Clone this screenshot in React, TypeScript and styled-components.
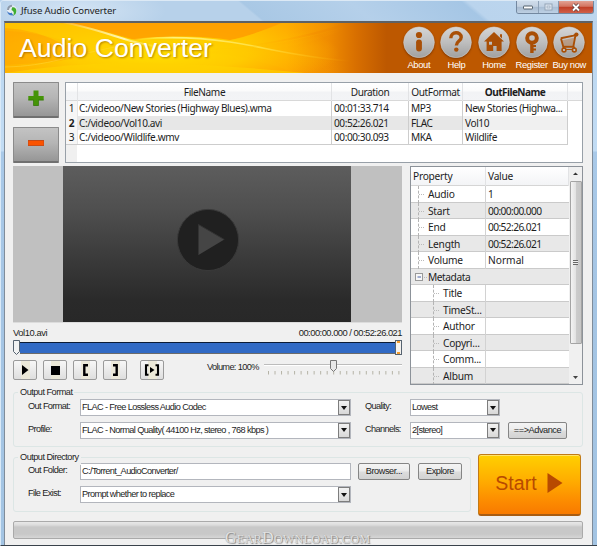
import React from "react";
import styled, { createGlobalStyle, css } from "styled-components";

const GlobalStyle = createGlobalStyle`
  *, *::before, *::after { box-sizing: border-box; }
  html, body { margin: 0; padding: 0; overflow: hidden; }
  body { background: #b4d0ec; }
`;

const segoe = `"Noto Sans", "Open Sans", sans-serif`;
const sans = `"Liberation Sans", Arial, sans-serif`;

/* ---------- window frame ---------- */

const Window = styled.div`
  width: 597px;
  height: 546px;
  display: flex;
  flex-direction: column;
  overflow: hidden;
  background: linear-gradient(180deg, #b9d1ea 0, #bdd8f1 60px, #c2dcf4 150px, #a9c9e8 151px, #a5c5e4 300px, #a3c4e3 100%);
  border-top: 1px solid #dce9f5;
  border-left: 1px solid #d9e9f7;
  border-bottom: 1px solid #39424b;
  border-radius: 4px 4px 0 0;
  color: #1d1d1d;
  white-space: nowrap;
`;

const TitleBar = styled.header`
  height: 20px;
  flex: none;
  display: flex;
  align-items: flex-start;
  padding-left: 5px;
  background:
    radial-gradient(ellipse 90px 26px at 75px 10px, rgba(222, 235, 247, 0.75), rgba(222, 235, 247, 0) 100%),
    linear-gradient(40deg, rgba(160, 193, 224, 0) 42%, #a9c8e5 42.5%, #b5d0ea 60%, #a5c6e5 78%, #bad4ed 79%, #bed7ef 100%),
    #b7d1ea;
`;

const TitleText = styled.span`
  flex: 1;
  margin-left: 3px;
  font: 9.6px/19px ${segoe};
  letter-spacing: -0.14px;
`;

const WindowButtons = styled.div`
  display: flex;
  height: 13px;
  margin-right: 3px;
  border: 1px solid #7388a0;
  border-top: 0;
  border-radius: 0 0 3px 3px;
  overflow: hidden;
`;

const WindowButton = styled.div<{ $w: number; $close?: boolean; $dim?: boolean }>`
  width: ${(p) => p.$w}px;
  display: flex;
  align-items: center;
  justify-content: center;
  border-left: 1px solid #8799ae;
  opacity: ${(p) => (p.$dim ? 0.85 : 1)};
  background: ${(p) =>
    p.$close
      ? "linear-gradient(180deg, #e2a193 0, #d37461 45%, #c03d25 50%, #d0604a 100%)"
      : "linear-gradient(180deg, #cfdcea 0, #c3d1e1 45%, #a7bacf 50%, #bed0e3 100%)"};
  &:first-child { border-left: 0; }
`;

const Body = styled.main`
  flex: 1;
  margin: 0 4px 0 3px;
  border: 1px solid #7f8c9a;
  border-top: 2px solid #5e6164;
  border-bottom: 0;
  background: #f0f0f0;
  display: flex;
  flex-direction: column;
`;

/* ---------- banner ---------- */

const Banner = styled.div`
  height: 50px;
  flex: none;
  display: grid;
  grid-template: 50px / 1fr auto;
  overflow: hidden;
  background: #bd5800;
`;

const BannerArt = styled.svg`
  grid-area: 1 / 1 / 2 / 3;
  width: 587px;
  height: 50px;
`;

const BannerTitle = styled.h1`
  grid-area: 1 / 1;
  z-index: 1;
  margin: 0;
  padding-left: 14px;
  font: 26.6px/51px ${sans};
  letter-spacing: 0.05px;
  color: #fff;
  text-shadow: 1px 1px 2px rgba(120, 70, 0, 0.55);
`;

const BannerNav = styled.nav`
  grid-area: 1 / 2;
  z-index: 1;
  display: flex;
  padding: 3px 4px 0 0;
`;

const NavItem = styled.a`
  width: 37.6px;
  display: flex;
  flex-direction: column;
  align-items: center;
  font: 9.4px/12px ${sans};
  letter-spacing: -0.35px;
  color: #fff;
  svg { flex: none; filter: drop-shadow(0 1px 1px rgba(80, 30, 0, 0.6)); }
`;

/* ---------- main content ---------- */

const Content = styled.div`
  flex: 1;
  display: flex;
  flex-direction: column;
  padding: 9px 9px 0 8px;
`;

const TopRow = styled.section`
  display: flex;
  height: 81px;
  gap: 6px;
`;

const SideButtons = styled.div`
  display: flex;
  flex-direction: column;
  justify-content: space-between;
`;

const SquareButton = styled.button`
  width: 46px;
  height: 36px;
  padding: 0 0 4px;
  border: 1px solid #8b8b8b;
  border-bottom: 2px solid #707070;
  border-radius: 1px;
  background: linear-gradient(180deg, #c3c3c3, #b5b5b5 45%, #969696);
  display: flex;
  align-items: center;
  justify-content: center;
`;

const FileTable = styled.div`
  flex: 1;
  border: 1px solid #98a0a8;
  background: linear-gradient(90deg, #f0f0f0 11px, #fff 11px);
  display: flex;
  flex-direction: column;
  font: 10.1px/14px ${segoe};
  letter-spacing: -0.4px;
`;

const tableColumns = css`
  display: grid;
  grid-template-columns: 12px 254px 77px 54px 105px 1fr;
`;

const TableHead = styled.div`
  ${tableColumns}
  height: 18.4px;
  line-height: 19px;
  background: linear-gradient(180deg, #fff, #fbfbfb 45%, #f2f3f5 55%, #f3f4f6);
  border-bottom: 1px solid #d8d8d8;
  span { text-align: center; border-right: 1px solid #e2e3e5; }
  span:last-child { border: 0; }
`;

const TableRow = styled.div<{ $selected?: boolean }>`
  ${tableColumns}
  height: 14.3px;
  span {
    padding-left: 2px;
    border-right: 1px solid #cdcdcd;
    background: ${(p) => (p.$selected ? "#e7e7e7" : "#fff")};
  }
  span:first-child {
    padding: 0;
    text-align: center;
    background: #f6f6f6;
    border-color: #e5e5e5;
    font-weight: ${(p) => (p.$selected ? 700 : 400)};
  }
  span:nth-child(2) { padding-left: 1px; }
  span:nth-child(5) { background: ${(p) => (p.$selected ? "#f0f0f0" : "#fff")}; }
`;

const TableEnd = styled.div`
  width: 502px;
  border-top: 1px solid #cdcdcd;
`;

const Fit = styled.b<{ $ls?: number; $bold?: boolean }>`
  font-weight: ${(p) => (p.$bold ? 700 : 400)};
  letter-spacing: ${(p) => p.$ls ?? 0}px;
`;

const MiddleRow = styled.section`
  display: flex;
  justify-content: space-between;
  height: 219px;
  margin-top: 3px;
`;

const Player = styled.div`
  width: 389px;
  display: flex;
  flex-direction: column;
  font: 9.4px/12px ${sans};
`;

const Screen = styled.div`
  height: 157px;
  display: flex;
  justify-content: center;
  padding-right: 1px;
  background: #c0c0c0;
  border-bottom: 1px solid #dcdcdc;
`;

const ScreenPicture = styled.div`
  width: 288px;
  background: linear-gradient(180deg, #5d5d5d, #4f4f4f 28%, #3a3a3a 60%, #2a2a2a 86%, #282828);
  display: flex;
  justify-content: center;
  align-items: center;
  padding: 0 0 8px 2px;
`;

const Caption = styled.div`
  display: flex;
  justify-content: space-between;
  margin-top: 4px;
  height: 13px;
`;

const SeekBar = styled.div`
  display: flex;
  align-items: center;
  height: 15px;
  i { flex: 1; height: 12px; background: #316ac5; border-top: 1px solid #0b1b35; border-bottom: 1px solid #6c6b6a; }
`;

const Controls = styled.div`
  display: flex;
  gap: 6px;
  margin-top: 5px;
  height: 20px;
  svg { flex: none; }
`;

const ControlButton = styled.button<{ $gap?: number }>`
  flex: none;
  width: 24px;
  height: 20px;
  padding: 0;
  margin-left: ${(p) => p.$gap ?? 0}px;
  border: 1px solid #9a9a9a;
  border-radius: 2px;
  background: linear-gradient(90deg, transparent 7px, #ece9d8 7px, #ece9d8 16px, transparent 16px), linear-gradient(180deg, #f7f7f7, #dedede);
  display: flex;
  align-items: center;
  justify-content: center;
`;

const VolumeLabel = styled.span`
  flex: 1;
  min-width: 0;
  margin-left: 37px;
  font-size: 9.2px;
  line-height: 14px;
  letter-spacing: -0.63px;
`;

const PropertyPanel = styled.div`
  width: 173px;
  display: flex;
  border: 1px solid #8c9299;
  background: #fff;
  font: 10.2px/16px ${segoe};
  letter-spacing: -0.25px;
`;

const PropertyGrid = styled.div`
  flex: 1;
  overflow: hidden;
`;

const PropertyHead = styled.div`
  display: grid;
  grid-template-columns: 75px 1fr;
  height: 19px;
  line-height: 19px;
  border-bottom: 1px solid #d5d5d5;
  background: linear-gradient(180deg, #fff, #f3f4f6);
  span { padding-left: 2px; border-right: 1px solid #e2e3e5; }
`;

const PropertyRow = styled.div<{ $alt?: boolean; $deep?: boolean }>`
  display: grid;
  grid-template-columns: ${(p) => (p.$deep ? 32 : 17)}px 1fr 83px;
  height: 16.5px;
  background: ${(p) => (p.$alt ? "#e8e8e8" : "#fff")};
  border-bottom: 1px solid #cacaca;
  span { border-right: 1px solid #d2d2d2; }
  span + span { padding-left: 2px; border: 0; }
`;

const Branch = styled.i<{ $deep?: boolean }>`
  margin-left: ${(p) => (p.$deep ? 22 : 7)}px;
  width: 7px;
  height: 17px;
  border-left: 1px dashed #b4b4b4;
  background: linear-gradient(90deg, #bbb 1px, transparent 1px) 0 8px / 2px 1px repeat-x;
`;

const Expander = styled.svg`
  margin-left: 4px;
`;

const ScrollBar = styled.div`
  width: 13px;
  display: flex;
  flex-direction: column;
  align-items: center;
  background: #f0f0f0;
  svg { flex: none; }
`;

const ScrollThumb = styled.div`
  flex: none;
  width: 12px;
  height: 163px;
  margin-bottom: auto;
  display: flex;
  align-items: center;
  justify-content: center;
  border: 1px solid #a4a4a4;
  border-radius: 1px;
  background: linear-gradient(90deg, #f3f3f3, #e3e3e3 45%, #cbcbcb 55%, #c6c6c6);
  i { width: 5px; height: 5px; background: repeating-linear-gradient(180deg, #666 0 1px, #eee 1px 2px); }
`;

/* ---------- output settings ---------- */

const Group = styled.section<{ $cols: string; $w?: number }>`
  position: relative;
  width: ${(p) => (p.$w ? p.$w + "px" : "auto")};
  height: 55px;
  padding: 6px 0 0 14px;
  border: 1px solid #dce6e5;
  border-radius: 3px;
  display: grid;
  grid-template-columns: ${(p) => p.$cols};
  grid-template-rows: 17px 17px;
  row-gap: 5.5px;
  font: 9.2px/15px ${sans};
  letter-spacing: -0.62px;
`;

const Legend = styled.span`
  position: absolute;
  left: 4px;
  top: -8px;
  padding: 0 2px;
  background: #f0f0f0;
  letter-spacing: -0.52px;
`;

const Field = styled.div`
  height: 17px;
  display: flex;
  border: 1px solid #b3b6bd;
  background: #fff;
  padding-left: 1px;
  > span { flex: 1; }
`;

const DropArrow = styled.i`
  width: 12px;
  border: 1px solid #7d7d7d;
  background: linear-gradient(180deg, #f2f2f2, #d8d8d8);
  display: flex;
  align-items: center;
  justify-content: center;
  &::after { content: ""; border: 3px solid transparent; border-top: 4px solid #111; border-bottom: 0; }
`;

const PushButton = styled.button`
  height: 17px;
  padding: 0;
  border: 1px solid #858585;
  border-radius: 2px;
  background: linear-gradient(180deg, #f4f4f4, #ececec 45%, #dcdcdc 55%, #d2d2d2);
  font: inherit;
  letter-spacing: -0.45px;
  color: inherit;
`;

const OutputFormat = styled.div`
  margin-top: 7px;
`;

const BottomRow = styled.div`
  display: flex;
  height: 62px;
  margin-top: 7px;
  align-items: flex-start;
  > section { margin-top: 3px; padding-top: 5px; row-gap: 6px; }
`;

const StartButton = styled.button`
  width: 103px;
  height: 62px;
  margin-left: 7px;
  padding: 0 1px 3px 0;
  display: flex;
  align-items: center;
  justify-content: center;
  gap: 10px;
  border: 1px solid #c17a16;
  border-bottom: 2px solid #a85c12;
  border-radius: 3px;
  box-shadow: inset 0 1px 0 #ffe36b;
  background: linear-gradient(180deg, #ffd000, #ffb000 40%, #fd8e00 75%, #f87a00);
  font: 19.5px/22px ${sans};
  letter-spacing: 0.1px;
  color: #b84a00;
`;

const ProgressBar = styled.div`
  height: 18px;
  flex: none;
  margin-top: 5px;
  border: 1px solid #aaa;
  border-radius: 2px;
  background: linear-gradient(180deg, #e8e8e8 0, #dcdcdc 3px, #c8c8c8 5px, #c8c8c8 12px, #d6d6d6 100%);
`;

const Watermark = styled.div`
  height: 14px;
  margin: -8px 0 0 212px;
  z-index: 1;
  font: 12.2px/14px "Liberation Serif", serif;
  letter-spacing: 0.25px;
  color: #e3e3e3;
  text-shadow: 1px 1px 1px #888, 0 0 1px #999;
  b { font-size: 16px; font-weight: 400; }
`;

const files = [
  { name: "C:/videoo/New Stories (Highway Blues).wma", time: "00:01:33.714", fmt: "MP3", out: "New Stories (Highwa..." },
  { name: "C:/videoo/Vol10.avi", time: "00:52:26.021", fmt: "FLAC", out: "Vol10" },
  { name: "C:/videoo/Wildlife.wmv", time: "00:00:30.093", fmt: "MKA", out: "Wildlife" },
];

const properties = [
  ["Audio", "1"],
  ["Start", "00:00:00.000"],
  ["End", "00:52:26.021"],
  ["Length", "00:52:26.021"],
  ["Volume", "Normal"],
];

const metadata = ["Title", "TimeSt...", "Author", "Copyri...", "Comm...", "Album"];

const ink = "#a94f06";

const navIcons: { label: string; art: React.ReactNode }[] = [
  {
    label: "About",
    art: (
      <>
        <circle cx="16" cy="9" r="3.1" fill={ink} />
        <rect x="13.1" y="13.4" width="5.8" height="12" rx="2.9" fill={ink} />
      </>
    ),
  },
  {
    label: "Help",
    art: (
      <>
        <path d="M10.8 12.2C10.8 5 21.2 5.2 21.2 11.2C21.2 15.2 16.4 14.8 16.4 19.4" fill="none" stroke={ink} strokeWidth="3.4" />
        <circle cx="16.3" cy="23.6" r="2.2" fill={ink} />
      </>
    ),
  },
  {
    label: "Home",
    art: (
      <path fillRule="evenodd" d="M16 6L26 15.5H23.6V25H18.6V20H15.2V25H8.6V15.5H6ZM11 15.7V18.7H14V15.7ZM22 8.2H24V12.5L22 10.6Z" fill={ink} />
    ),
  },
  {
    label: "Register",
    art: (
      <>
        <circle cx="16" cy="12" r="4.8" fill="none" stroke={ink} strokeWidth="4" />
        <path d="M14.2 17H17.2V19H20V21H17.6V22.5H20V24.5H17.6V27H14.2Z" fill={ink} />
      </>
    ),
  },
  {
    label: "Buy now",
    art: (
      <>
        <path d="M7.8 12.3L20.5 9.6L24 8.2" fill="none" stroke={ink} strokeWidth="1.9" />
        <circle cx="23.4" cy="8.6" r="2.1" fill={ink} />
        <path d="M9.3 14.2L21 11.7L20 19.8H10.5Z" fill={ink} opacity="0.3" />
        <path d="M8 12.6L10.3 20.8H20.3L22.4 9.5" fill="none" stroke={ink} strokeWidth="1.9" />
        <path d="M20.8 20.5L22.4 23.5H10.5L10.5 20.8" fill="none" stroke={ink} strokeWidth="1.2" />
        <circle cx="11" cy="24" r="1.9" fill="#ccc" stroke={ink} strokeWidth="1.6" />
        <circle cx="21.3" cy="24" r="1.9" fill="#ccc" stroke={ink} strokeWidth="1.6" />
      </>
    ),
  },
];

function WaveArt() {
  return (
    <BannerArt viewBox="0 0 587 50" preserveAspectRatio="none">
      <defs>
        <linearGradient id="base">
          <stop offset="0" stopColor="#ffb000" />
          <stop offset=".3" stopColor="#ffb300" />
          <stop offset=".48" stopColor="#ffa200" />
          <stop offset=".55" stopColor="#f08c00" />
          <stop offset=".6" stopColor="#d76e00" />
          <stop offset=".65" stopColor="#bd5800" />
        </linearGradient>
        <radialGradient id="glow">
          <stop offset="0" stopColor="#ffdf00" />
          <stop offset=".5" stopColor="#ffd200" stopOpacity=".8" />
          <stop offset="1" stopColor="#ffc000" stopOpacity="0" />
        </radialGradient>
        <linearGradient id="streak">
          <stop offset="0" stopColor="#fff0a0" stopOpacity=".2" />
          <stop offset=".6" stopColor="#fff7b8" />
          <stop offset="1" stopColor="#ffe64a" stopOpacity="0" />
        </linearGradient>
        <linearGradient id="arc">
          <stop offset="0" stopColor="#ffe600" stopOpacity="0" />
          <stop offset=".25" stopColor="#fff27a" />
          <stop offset=".6" stopColor="#ffdf40" />
          <stop offset="1" stopColor="#ffb000" stopOpacity="0" />
        </linearGradient>
        <linearGradient id="beam">
          <stop offset="0" stopColor="#ffd000" stopOpacity=".7" />
          <stop offset="1" stopColor="#ffb000" stopOpacity="0" />
        </linearGradient>
      </defs>
      <rect width="587" height="50" fill="url(#base)" />
      <ellipse cx="150" cy="30" rx="185" ry="38" fill="url(#glow)" />
      <path d="M0 8C35 9 70 18 85 30C60 40 30 40 0 42Z" fill="#ff9f00" opacity=".35" />
      <path d="M0 0H55C85 4 110 14 130 20L60 22Q30 6 0 5Z" fill="#ffd000" opacity=".6" />
      <path d="M62 0H275C262 6 240 15 225 17C200 13 160 12 130 17C110 11 85 4 62 0Z" fill="#ff9d00" opacity=".85" />
      <path d="M222 18Q255 10 277 0H340Q300 14 245 22Z" fill="url(#beam)" />
      <path d="M190 30Q260 24 345 4Q300 24 260 26Q310 36 345 40V50H290Q240 30 190 30Z" fill="url(#beam)" opacity=".4" />
      <path d="M0 50Q80 38 150 40T300 50Z" fill="#ffd200" opacity=".6" />
      <path d="M57 -1C85 4 108 13 130 19C142 22 152 24 160 24" fill="none" stroke="url(#streak)" strokeWidth="2" />
      <path d="M110 20C150 12 190 14 225 19C255 23 290 34 345 38" fill="none" stroke="url(#arc)" strokeWidth="1.6" />
      <path d="M0 44C45 43 60 33 125 21" fill="none" stroke="#ffd83a" strokeOpacity=".5" />
      <path d="M190 26C250 28 300 15 340 4" fill="none" stroke="url(#beam)" />
    </BannerArt>
  );
}

const knobGradient = (
  <linearGradient id="knob" x2="0" y2="1">
    <stop offset="0" stopColor="#d5d5d5" />
    <stop offset=".5" stopColor="#bebebe" />
    <stop offset="1" stopColor="#a0a0a0" />
  </linearGradient>
);

function Select({ children }: { children: React.ReactNode }) {
  return (
    <Field>
      <span>{children}</span>
      <DropArrow />
    </Field>
  );
}

export default function App() {
  return (
    <>
      <GlobalStyle />
      <Window>
        <TitleBar>
          <svg width="12" height="17" viewBox="0 0 12 17">
            <circle cx="6" cy="9.5" r="5" fill="#e7edf2" />
            <path d="M2 9A4.5 4.5 0 0 1 6 4.8" fill="none" stroke="#8d99a8" strokeWidth="2" />
            <path d="M6 6.5C10 5.2 11.5 10 9.5 13L7 15Q9.2 10.5 5.5 9Z" fill="#3fae31" />
            <path d="M1 10Q2 15 7.5 14.5L5.5 11.5Q3.5 13 1 10Z" fill="#3e78c8" />
          </svg>
          <TitleText>Jfuse Audio Converter</TitleText>
          <WindowButtons>
            <WindowButton $w={21}>
              <svg width="10" height="5"><rect x=".5" y="1" width="9" height="3" rx=".5" fill="#fff" stroke="#53606d" /></svg>
            </WindowButton>
            <WindowButton $w={20} $dim>
              <svg width="9" height="8"><rect x="1" y="1" width="7" height="6" fill="#e9eef4" stroke="#8d9cac" /><rect x="3" y="3" width="3" height="2" fill="none" stroke="#8d9cac" strokeWidth=".7" /></svg>
            </WindowButton>
            <WindowButton $w={35} $close>
              <svg width="10" height="9" viewBox="0 0 10 9">
                <path d="M2 1.5L8 7.5M8 1.5L2 7.5" stroke="#5a3f40" strokeWidth="3.4" />
                <path d="M2 1.5L8 7.5M8 1.5L2 7.5" stroke="#fff" strokeWidth="1.9" />
              </svg>
            </WindowButton>
          </WindowButtons>
        </TitleBar>

        <Body>
          <Banner>
            <WaveArt />
            <BannerTitle>Audio Converter</BannerTitle>
            <BannerNav>
              {navIcons.map(({ label, art }) => (
                <NavItem key={label}>
                  <svg width="32" height="33" viewBox="0 0 32 33">
                    <defs>{knobGradient}</defs>
                    <circle cx="16" cy="16.3" r="15.4" fill="url(#knob)" stroke="#d9d2cc" strokeWidth=".5" />
                    {art}
                  </svg>
                  {label}
                </NavItem>
              ))}
            </BannerNav>
          </Banner>

          <Content>
            <TopRow>
              <SideButtons>
                <SquareButton aria-label="Add">
                  <svg width="16" height="16" viewBox="0 0 16 16">
                    <path d="M5.5 0.5H10.5V6H15.7V10.3H10.5V15.7H5.5V10.3H.3V6H5.5Z" fill="#459407" />
                    <path d="M.3 10H5.5V15.5H10.5V10H15.7" fill="none" stroke="#32750a" strokeWidth=".7" />
                  </svg>
                </SquareButton>
                <SquareButton aria-label="Remove">
                  <svg width="16" height="6"><rect width="16" height="6" fill="#c24b18" /><rect x=".5" y="1" width="15" height="4.2" fill="#fb5300" /></svg>
                </SquareButton>
              </SideButtons>
              <FileTable>
                <TableHead>
                  <span />
                  <span>FileName</span>
                  <span>Duration</span>
                  <span>OutFormat</span>
                  <span><Fit $bold $ls={-0.55}>OutFileName</Fit></span>
                  <span />
                </TableHead>
                {files.map((f, i) => (
                  <TableRow key={f.name} $selected={i === 1}>
                    <span>{i + 1}</span>
                    <span>{f.name}</span>
                    <span><Fit $ls={-0.45}>{f.time}</Fit></span>
                    <span>{f.fmt}</span>
                    <span>{f.out}</span>
                  </TableRow>
                ))}
                <TableEnd />
              </FileTable>
            </TopRow>

            <MiddleRow>
              <Player>
                <Screen>
                  <ScreenPicture>
                    <svg width="64" height="64" viewBox="0 0 64 64">
                      <circle cx="32" cy="32" r="30.6" fill="#202020" stroke="#3a3a3a" />
                      <path d="M22.5 16.5V47L48.3 31.5Z" fill="#454545" />
                      <path d="M22.5 47V16.5L48.3 31.5" fill="none" stroke="#333" />
                    </svg>
                  </ScreenPicture>
                </Screen>
                <Caption>
                  <Fit $ls={-0.42}>Vol10.avi</Fit>
                  <Fit $ls={-0.52}>00:00:00.000 / 00:52:26.021</Fit>
                </Caption>
                <SeekBar>
                  <svg width="7" height="15"><path d="M.5.5H6.5V11.5L3.5 14.5L.5 11.5Z" fill="#f1f2f2" stroke="#566370" /></svg>
                  <i />
                  <svg width="7" height="15"><rect x=".5" y=".5" width="6" height="14" fill="#f4f2ef" stroke="#566370" /><rect x="2" y="1" width="3" height="2" fill="#f59c2c" /><rect x="2" y="12" width="3" height="2" fill="#f59c2c" /></svg>
                </SeekBar>
                <Controls>
                  <ControlButton aria-label="Play"><svg width="8" height="12"><path d="M1 1L7.5 6L1 11Z" /></svg></ControlButton>
                  <ControlButton aria-label="Stop"><svg width="9" height="9"><rect width="9" height="9" /></svg></ControlButton>
                  <ControlButton aria-label="Mark start"><svg width="7" height="12"><path d="M6 1.2H2.3V10.8H6" fill="none" stroke="#000" strokeWidth="2.4" /></svg></ControlButton>
                  <ControlButton aria-label="Mark end"><svg width="7" height="12"><path d="M1 1.2H4.7V10.8H1" fill="none" stroke="#000" strokeWidth="2.4" /></svg></ControlButton>
                  <ControlButton aria-label="Play selection" $gap={7}>
                    <svg width="16" height="12"><path d="M4.5 1.2H2V10.8H4.5M11.5 1.2H14V10.8H11.5" fill="none" stroke="#000" strokeWidth="2.1" /><path d="M6 3L10.5 6L6 9Z" /></svg>
                  </ControlButton>
                  <VolumeLabel>Volume: 100%</VolumeLabel>
                  <svg width="138" height="18" viewBox="0 0 138 18">
                    <path d="M0 4.5H138" stroke="#bcbcbc" />
                    <path d="M0 5.5H138" stroke="#fff" />
                    {Array.from({ length: 21 }, (_, i) => (
                      <path key={i} d={`M${4.5 + i * 6.52} 11V14.5`} stroke="#b5b3a6" />
                    ))}
                    <path d="M66.5.5H72.5V8.5L69.5 11.5L66.5 8.5Z" fill="#e8e8e8" stroke="#777" />
                  </svg>
                </Controls>
              </Player>

              <PropertyPanel>
                <PropertyGrid>
                  <PropertyHead>
                    <span>Property</span>
                    <span>Value</span>
                  </PropertyHead>
                  {properties.map(([k, v], i) => (
                    <PropertyRow key={k} $alt={i % 2 === 1}>
                      <Branch />
                      <span>{k}</span>
                      <span><Fit $ls={v.length > 8 ? -0.6 : 0}>{v}</Fit></span>
                    </PropertyRow>
                  ))}
                  <PropertyRow $alt>
                    <Expander width="13" height="16">
                      <rect x=".5" y="4.5" width="7" height="7" fill="#f7f7f7" stroke="#999" />
                      <path d="M2.5 8H6" stroke="#4b63a7" />
                      <path d="M9 8.5H13" stroke="#bbb" strokeDasharray="1 1" />
                    </Expander>
                    <Fit $ls={-0.45}>Metadata</Fit>
                  </PropertyRow>
                  {metadata.map((k, i) => (
                    <PropertyRow key={k} $deep $alt={i % 2 === 1}>
                      <Branch $deep />
                      <span>{k}</span>
                      <span />
                    </PropertyRow>
                  ))}
                </PropertyGrid>
                <ScrollBar>
                  <svg width="13" height="14"><path d="M4 8L6.5 5.5L9 8Z" fill="#333" /></svg>
                  <ScrollThumb><i /></ScrollThumb>
                  <svg width="13" height="13"><path d="M4 5L6.5 8L9 5Z" fill="#444" /></svg>
                </ScrollBar>
              </PropertyPanel>
            </MiddleRow>

            <OutputFormat>
              <Group $cols="52px 271px 14px 45px 90px 8px 59px">
                <Legend>Output Format</Legend>
                <span>Out Format:</span>
                <Select>FLAC - Free Lossless Audio Codec</Select>
                <i />
                <span>Quality:</span>
                <Select>Lowest</Select>
                <i />
                <i />
                <span>Profile:</span>
                <Select>FLAC - Normal Quality( 44100 Hz, stereo , 768 kbps )</Select>
                <i />
                <span>Channels:</span>
                <Select>2[stereo]</Select>
                <i />
                <PushButton>==&gt;Advance</PushButton>
              </Group>
            </OutputFormat>

            <BottomRow>
              <Group $w={458} $cols="52px 271px 7px 52px 8px 44px">
                <Legend>Output Directory</Legend>
                <span>Out Folder:</span>
                <Field><span>C:/Torrent_AudioConverter/</span></Field>
                <i />
                <PushButton>Browser...</PushButton>
                <i />
                <PushButton>Explore</PushButton>
                <span>File Exist:</span>
                <Select>Prompt whether to replace</Select>
              </Group>
              <StartButton>
                Start
                <svg width="16" height="22"><path d="M.5 1V21L15.5 11Z" fill="#b84a00" /></svg>
              </StartButton>
            </BottomRow>

            <ProgressBar />
            <Watermark><b>G</b>EAR<b>D</b>OWNLOAD.COM</Watermark>
          </Content>
        </Body>
      </Window>
    </>
  );
}
